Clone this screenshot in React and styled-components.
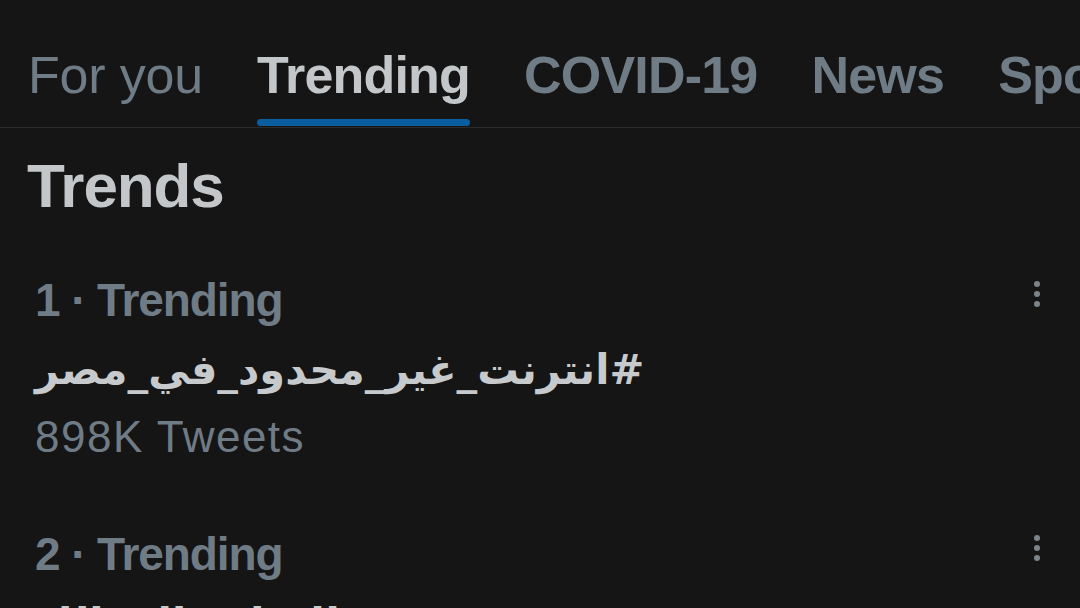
import React from "react";
import styled, { createGlobalStyle } from "styled-components";

const Global = createGlobalStyle`
  html, body {
    margin: 0;
    padding: 0;
    background: #151515;
    overflow: hidden;
  }
  body {
    font-family: "Liberation Sans", Arial, "DejaVu Sans", sans-serif;
    -webkit-font-smoothing: antialiased;
  }
`;

const Screen = styled.div`
  width: 1080px;
  height: 608px;
  overflow: hidden;
  background: #151515;
`;

const TabBar = styled.nav`
  display: flex;
  gap: 54px;
  height: 127px;
  padding-left: 28px;
  border-bottom: 1px solid #2a2b2c;
  overflow: hidden;
  white-space: nowrap;
`;

const Tab = styled.div`
  display: flex;
  flex-direction: column;
  flex-shrink: 0;
  padding-top: 49px;
`;

const TabLabel = styled.span`
  font-size: 52px;
  line-height: 52px;
  font-weight: ${(p) => (p.$regular ? 400 : 700)};
  letter-spacing: ${(p) => (p.$regular ? "-0.2px" : "-0.8px")};
  color: ${(p) => (p.$active ? "#c4c7ca" : "#6f7c86")};
`;

const Underline = styled.div`
  margin-top: auto;
  margin-bottom: 1px;
  height: 7px;
  border-radius: 4px;
  background: ${(p) => (p.$active ? "#0a5e9e" : "transparent")};
`;

const Heading = styled.h1`
  margin: 27px 0 0 27px;
  font-size: 62px;
  line-height: 62px;
  font-weight: 700;
  letter-spacing: -1.1px;
  color: #c4c7ca;
`;

const List = styled.div`
  display: flex;
  flex-direction: column;
  margin-top: 24px;
`;

const Row = styled.div`
  display: flex;
  align-items: flex-start;
  padding: 36px 36px 36px 35px;
`;

const RowBody = styled.div`
  flex: 1;
  display: flex;
  flex-direction: column;
`;

const Meta = styled.div`
  font-size: 46px;
  line-height: 46px;
  font-weight: 700;
  letter-spacing: -1.1px;
  color: #6f7c86;
`;

const Hashtag = styled.div`
  margin-top: 12px;
  font-family: "DejaVu Sans", sans-serif;
  font-size: 41.5px;
  line-height: 70px;
  font-weight: 700;
  color: #c7cacc;
  display: flex;
  justify-content: flex-start;
`;

const HashText = styled.span`
  direction: rtl;
  unicode-bidi: isolate;
`;

const Count = styled.div`
  margin-top: 10px;
  font-size: 44px;
  line-height: 44px;
  font-weight: 400;
  letter-spacing: 1.5px;
  color: #6f7c86;
`;

const MoreButton = styled.div`
  display: flex;
  margin-top: 4px;
  width: 14px;
  justify-content: center;
`;

const Kebab = () => (
  <svg width="6" height="26" viewBox="0 0 6 26" fill="#7d8489">
    <circle cx="3" cy="3" r="3" />
    <circle cx="3" cy="13" r="3" />
    <circle cx="3" cy="23" r="3" />
  </svg>
);

const tabs = [
  { label: "For you", regular: true },
  { label: "Trending", active: true },
  { label: "COVID-19" },
  { label: "News" },
  { label: "Sports" },
];

const trends = [
  { rank: 1, tag: "#انترنت_غير_محدود_في_مصر", count: "898K Tweets" },
  { rank: 2, tag: "#الاهلي_الزمالك", count: "120K Tweets" },
];

export default function App() {
  return (
    <Screen>
      <Global />
      <TabBar>
        {tabs.map((t) => (
          <Tab key={t.label}>
            <TabLabel $active={t.active} $regular={t.regular}>
              {t.label}
            </TabLabel>
            <Underline $active={t.active} />
          </Tab>
        ))}
      </TabBar>
      <Heading>Trends</Heading>
      <List>
        {trends.map((tr) => (
          <Row key={tr.rank}>
            <RowBody>
              <Meta>{tr.rank} · Trending</Meta>
              <Hashtag>
                <HashText dir="rtl">{tr.tag}</HashText>
              </Hashtag>
              <Count>{tr.count}</Count>
            </RowBody>
            <MoreButton>
              <Kebab />
            </MoreButton>
          </Row>
        ))}
      </List>
    </Screen>
  );
}
